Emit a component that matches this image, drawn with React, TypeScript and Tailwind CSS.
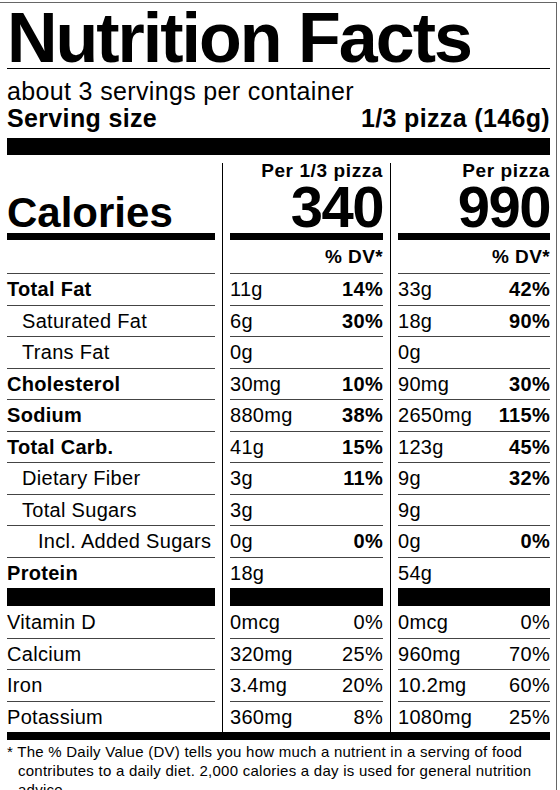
import type { ReactNode } from "react"

const nutrients = [
  { name: "Total Fat", bold: true, pad: "", a: "11g", ap: "14%", b: "33g", bp: "42%" },
  { name: "Saturated Fat", bold: false, pad: "pl-[15px]", a: "6g", ap: "30%", b: "18g", bp: "90%" },
  { name: "Trans Fat", bold: false, pad: "pl-[15px]", a: "0g", ap: "", b: "0g", bp: "" },
  { name: "Cholesterol", bold: true, pad: "", a: "30mg", ap: "10%", b: "90mg", bp: "30%" },
  { name: "Sodium", bold: true, pad: "", a: "880mg", ap: "38%", b: "2650mg", bp: "115%" },
  { name: "Total Carb.", bold: true, pad: "", a: "41g", ap: "15%", b: "123g", bp: "45%" },
  { name: "Dietary Fiber", bold: false, pad: "pl-[15px]", a: "3g", ap: "11%", b: "9g", bp: "32%" },
  { name: "Total Sugars", bold: false, pad: "pl-[15px]", a: "3g", ap: "", b: "9g", bp: "" },
  { name: "Incl. Added Sugars", bold: false, pad: "pl-[31px]", a: "0g", ap: "0%", b: "0g", bp: "0%" },
  { name: "Protein", bold: true, pad: "", a: "18g", ap: "", b: "54g", bp: "" },
]

const vitamins = [
  ["Vitamin D", "0mcg", "0%", "0mcg", "0%"],
  ["Calcium", "320mg", "25%", "960mg", "70%"],
  ["Iron", "3.4mg", "20%", "10.2mg", "60%"],
  ["Potassium", "360mg", "8%", "1080mg", "25%"],
]

function Divider() {
  return <div className="mx-[7px] w-px bg-black" />
}

function Cols({ h, cell = "", a, b, c }: { h: string; cell?: string; a?: ReactNode; b?: ReactNode; c?: ReactNode }) {
  return (
    <div className={`flex ${h}`}>
      <div className={`w-[208px] ${cell}`}>{a}</div>
      <Divider />
      <div className={`w-[153px] ${cell}`}>{b}</div>
      <Divider />
      <div className={`w-[152px] ${cell}`}>{c}</div>
    </div>
  )
}

function Amount({ value, pct, boldPct }: { value: string; pct: string; boldPct: boolean }) {
  return (
    <>
      <span>{value}</span>
      <span className={boldPct ? "font-bold" : ""}>{pct}</span>
    </>
  )
}

export default function App() {
  return (
    <div className="min-h-screen bg-white text-black font-['Liberation_Sans',Arial,Helvetica,sans-serif]">
      <div className="-ml-px mt-[2px] w-[558px] border border-[#666] pb-4 pl-[7px] pr-[6px]">
        <h1 className="text-[70px] font-bold leading-none tracking-[-2px]">Nutrition Facts</h1>
        <div className="-mt-[5px] h-px bg-black" />

        <div className="mt-[9px] text-[25px] leading-[27px] tracking-[0.35px]">
          <p>about 3 servings per container</p>
          <p className="flex justify-between font-bold">
            <span>Serving size</span>
            <span>1/3 pizza (146g)</span>
          </p>
        </div>
        <div className="mt-[6px] h-[17px] bg-black" />

        <div className="mt-[8px]">
          <Cols
            h="h-[70px]"
            cell="flex flex-col items-end justify-end"
            a={<span className="self-start text-[42px] font-bold leading-[40px]">Calories</span>}
            b={
              <>
                <span className="mb-[2px] text-[19px] font-bold leading-[16px] tracking-[0.6px]">Per 1/3 pizza</span>
                <span className="text-[58px] font-bold leading-[52px] tracking-[-1.5px]">340</span>
              </>
            }
            c={
              <>
                <span className="mb-[2px] text-[19px] font-bold leading-[16px] tracking-[0.6px]">Per pizza</span>
                <span className="text-[58px] font-bold leading-[52px] tracking-[-1.5px]">990</span>
              </>
            }
          />
          <Cols h="h-[7px]" cell="bg-black" />
          <Cols
            h="h-[33px]"
            cell="pt-[7px] text-right text-[19px] font-bold leading-none tracking-[0.4px]"
            b="% DV*"
            c="% DV*"
          />

          <div className="text-[20px] leading-none tracking-[0.3px]">
            {nutrients.map((n) => (
              <Cols
                key={n.name}
                h="h-[31.5px]"
                cell="flex items-center justify-between border-t border-[#444]"
                a={<span className={`whitespace-nowrap ${n.pad} ${n.bold ? "font-bold" : ""}`}>{n.name}</span>}
                b={<Amount value={n.a} pct={n.ap} boldPct />}
                c={<Amount value={n.b} pct={n.bp} boldPct />}
              />
            ))}
            <Cols h="h-[18px]" cell="bg-black" />
            {vitamins.map((v, i) => (
              <Cols
                key={v[0]}
                h="h-[31.5px]"
                cell={`flex items-center justify-between ${i > 0 ? "border-t border-[#444]" : "pt-[1px]"}`}
                a={<span>{v[0]}</span>}
                b={<Amount value={v[1]} pct={v[2]} boldPct={false} />}
                c={<Amount value={v[3]} pct={v[4]} boldPct={false} />}
              />
            ))}
          </div>
        </div>
        <div className="h-[8px] bg-black" />

        <p className="mt-[2px] pl-[11px] -indent-[11px] text-[15px] leading-[19px] tracking-[0.25px]">
          * The % Daily Value (DV) tells you how much a nutrient in a serving of food contributes to a daily diet. 2,000
          calories a day is used for general nutrition advice.
        </p>
      </div>
    </div>
  )
}
